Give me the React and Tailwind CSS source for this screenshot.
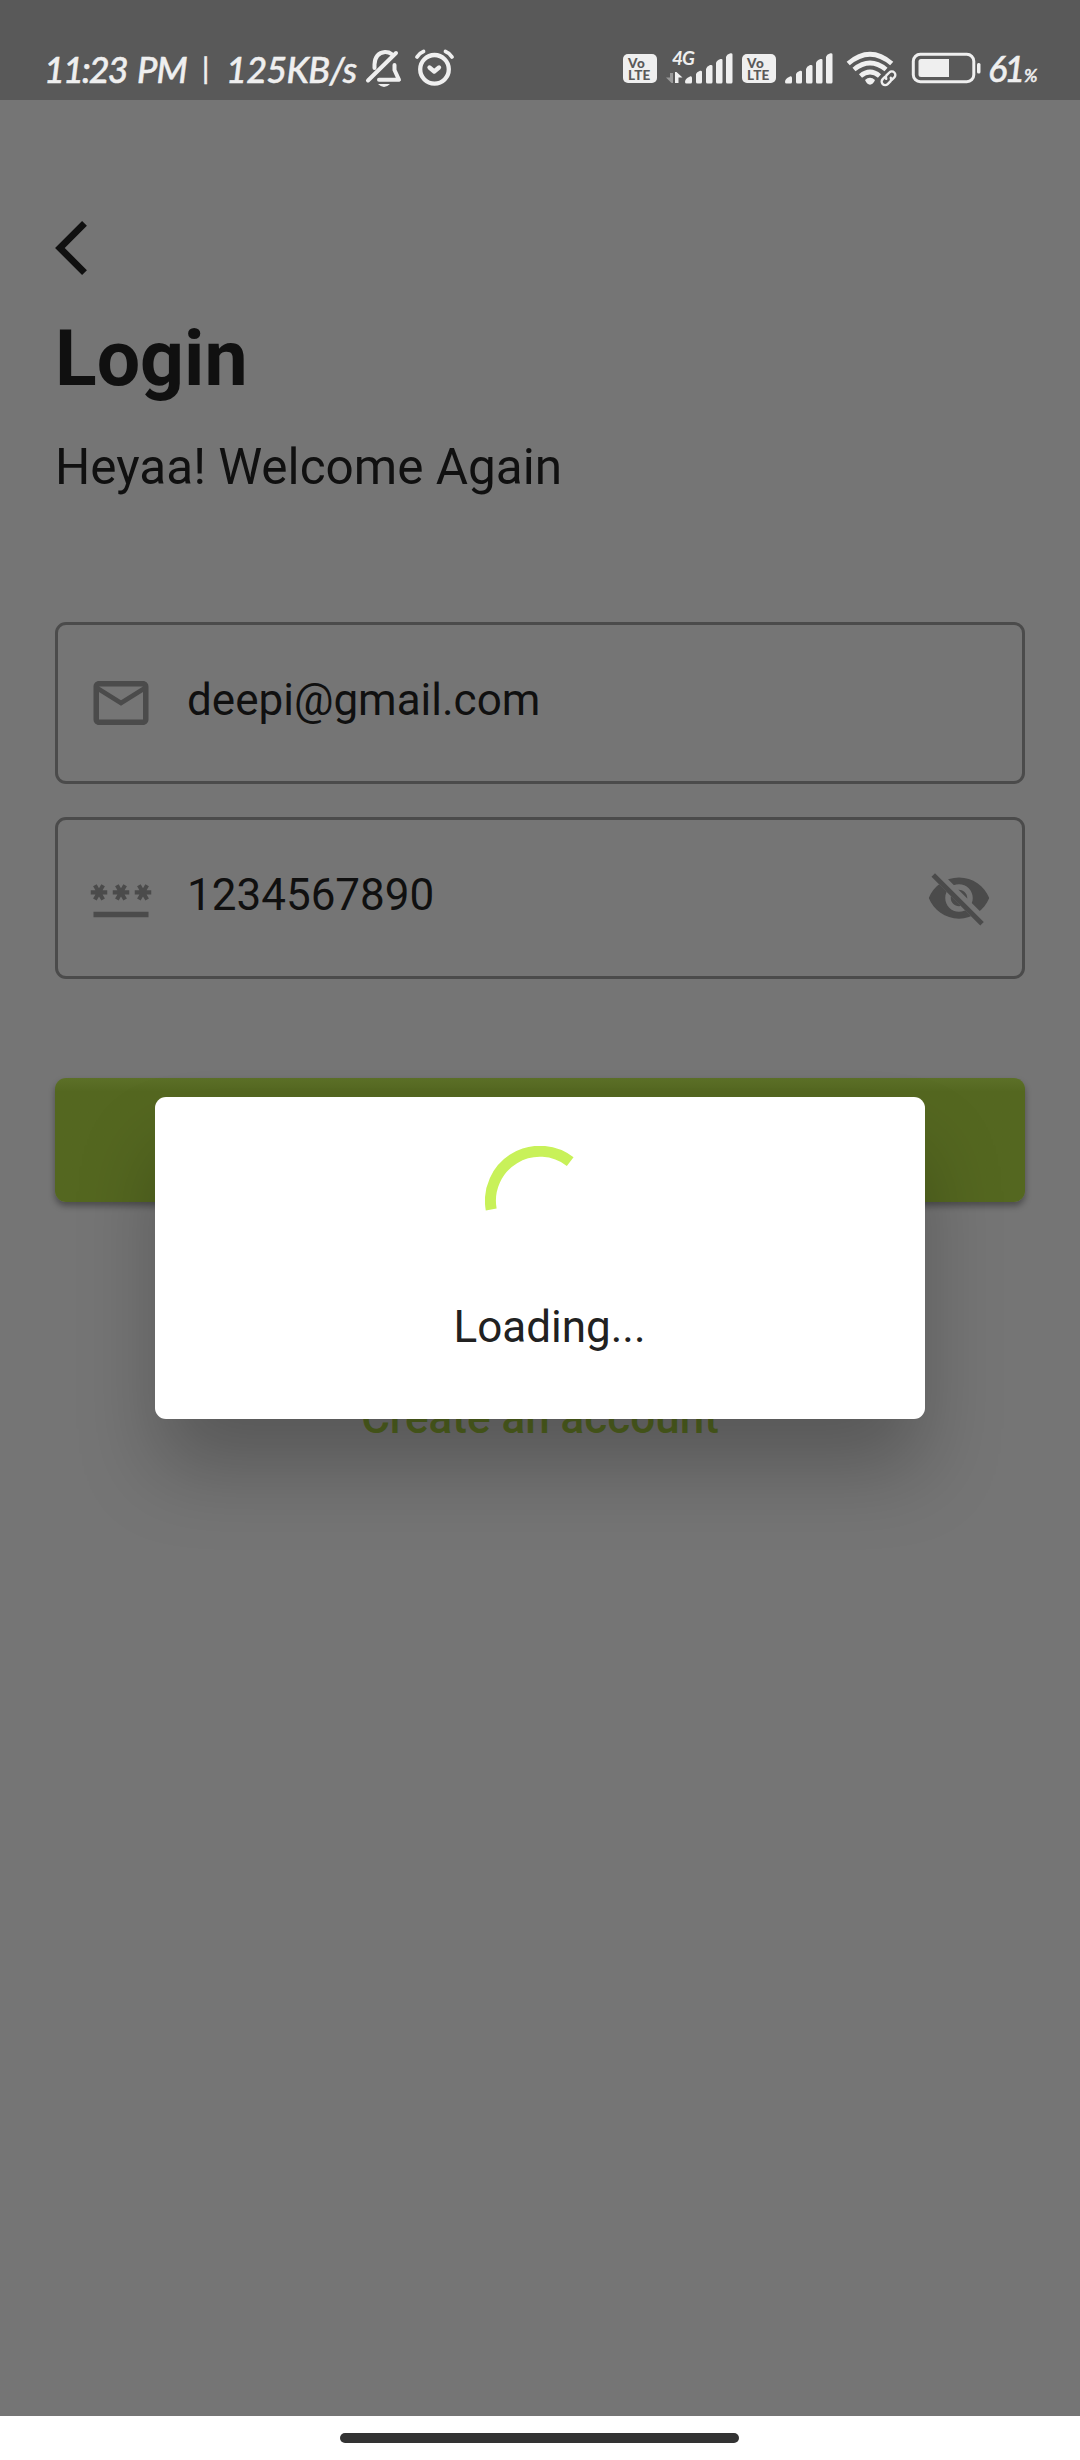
import React from "react";
import { MdOutlineMail, MdPassword } from "react-icons/md";

function MutedBell() {
  return (
    <svg className="ml-[7px] shrink-0" width="38" height="100" viewBox="365 0 38 100" fill="none" stroke="#efefef" strokeWidth="4" strokeLinecap="round" strokeLinejoin="round">
      <path d="M374.500 68V64.500Q375 53 385 52Q389 51.900 391.500 54" />
      <path d="M368 80.500L396 53" />
      <path d="M394.500 65V70L399 79.800H379" />
      <path d="M378 84H390Q384 90 378 84Z" fill="#efefef" stroke="none" />
    </svg>
  );
}

function Alarm() {
  return (
    <svg className="ml-[11px] shrink-0" width="42" height="100" viewBox="414 0 42 100" fill="none" stroke="#efefef" strokeWidth="4.300" strokeLinecap="round" strokeLinejoin="round">
      <circle cx="434.500" cy="69.300" r="14.300" />
      <path d="M429.500 67.500L434.200 71.500L439 67.500" />
      <path d="M417 57Q419.500 53 423.500 51.500M452 57Q449.500 53 445.500 51.500" strokeWidth="3.800" />
    </svg>
  );
}

function VoLte({ className }) {
  return (
    <div className={"flex h-[29px] w-[34px] shrink-0 flex-col items-start justify-center rounded-[5px] bg-[#efefef] pl-[5px] font-['Lato'] text-[13.5px] font-black leading-[12px] text-[#595959] " + className}>
      <span className="tracking-[0.5px]">Vo</span>
      <span className="tracking-[0.3px]">LTE</span>
    </div>
  );
}

function SignalBars({ className }) {
  return (
    <svg className={"shrink-0 " + className} width="48" height="100" viewBox="0 0 48 100" fill="#efefef">
      <path d="M0 82Q0 79 4 77L5.500 76.300Q7 76 7 78V82Q7 83.500 5.500 83.500H1.500Q0 83.500 0 82Z" />
      <path d="M11 74Q11.500 72 15 70.800Q17 70.300 17 72V82Q17 83.500 15.500 83.500H12.500Q11 83.500 11 82Z" />
      <path d="M21 69Q21.500 66.500 25 65Q27.500 64.500 27.500 66V82Q27.500 83.500 26 83.500H22.500Q21 83.500 21 82Z" />
      <path d="M31 63Q31.500 60.500 35.500 59Q37.500 58.500 37.500 60V82Q37.500 83.500 36 83.500H32.500Q31 83.500 31 82Z" />
      <path d="M41 57Q41.500 54.500 45.500 53.200Q47.500 53 47.500 54.500V82Q47.500 83.500 46 83.500H42.500Q41 83.500 41 82Z" />
    </svg>
  );
}

function MobileData() {
  return (
    <div className="ml-[9px] flex h-[36px] w-[30px] shrink-0 flex-col">
      <span className="pl-[6px] font-['Lato'] text-[19px] font-bold italic leading-[18px] tracking-[-1px] text-[#efefef]">4G</span>
      <svg className="mt-[4px]" width="18" height="14" viewBox="0 0 18 14">
        <path d="M4 2H7V12H5.500L0 6.500H4Z" fill="#989898" />
        <path d="M9 12V1H10.500L16.500 6.500H12.500V12Z" fill="#efefef" />
      </svg>
    </div>
  );
}

function Wifi() {
  return (
    <svg className="ml-[13px] shrink-0" width="52" height="100" viewBox="846 0 52 100" fill="none" stroke="#efefef">
      <path d="M848.200 63.500Q870 45 891.700 63.500" strokeWidth="4.800" />
      <path d="M854 69.500Q870 56.500 886 69.500" strokeWidth="4.800" />
      <path d="M860.500 76Q870 68 879.500 76" strokeWidth="4.800" />
      <path d="M865 80Q870 75.500 875 80Q873 84.500 870 84.700Q867 84.500 865 80Z" fill="#efefef" stroke="none" />
      <path d="M881 74H886V84H881Z" fill="#595959" stroke="none" />
      <g transform="rotate(-45 888.500 78.300)" strokeWidth="2.400" strokeLinecap="round" strokeLinejoin="round">
        <path d="M887 74.800H883.800A3.500 3.500 0 0 0 883.800 81.800H888A3.500 3.500 0 0 0 890.500 79.500" />
        <path d="M890 81.800H893.200A3.500 3.500 0 0 0 893.200 74.800H889A3.500 3.500 0 0 0 886.500 77.100" />
      </g>
    </svg>
  );
}

function Battery() {
  return (
    <svg className="ml-[13px] shrink-0" width="71" height="100" viewBox="911 0 71 100">
      <rect x="913.300" y="54.300" width="60.500" height="27.400" rx="7" fill="none" stroke="#efefef" strokeWidth="3" />
      <path d="M921 59H949V77H921Q918.500 77 918.500 74.500V61.500Q918.500 59 921 59Z" fill="#efefef" />
      <rect x="977" y="63" width="3.500" height="10.500" rx="1.500" fill="#efefef" />
    </svg>
  );
}

function StatusBar() {
  return (
    <header className="flex h-[100px] shrink-0 items-center bg-[#595959] pl-[44px] text-[#efefef]">
      <div className="mt-[36px] flex h-[36px] w-[314px] shrink-0 whitespace-nowrap pt-[1px] font-['Lato'] text-[36px] font-medium italic leading-[36px] [-webkit-text-stroke:0.5px_#efefef]">
        <span className="w-[93px] tracking-[-2px]">11:23</span>
        <span className="w-[65px] tracking-[-1px]">PM</span>
        <span className="mt-[3px] w-[24px] text-[28px] leading-[28px]">|</span>
        <span className="tracking-[-0.700px]">125KB/s</span>
      </div>
      <MutedBell />
      <Alarm />
      <VoLte className="ml-[167px] mt-[37px]" />
      <div className="mt-[34px]"><MobileData /></div>
      <SignalBars className="-ml-[11px]" />
      <VoLte className="ml-[9px] mt-[37px]" />
      <SignalBars className="ml-[9px]" />
      <Wifi />
      <Battery />
      <div className="ml-[6px] mt-[36px] flex h-[36px] items-baseline font-['Lato'] text-[36px] font-medium italic leading-[36px] [-webkit-text-stroke:0.5px_#efefef]">
        <span className="tracking-[-3px]">61</span>
        <span className="ml-[2px] text-[18px]">%</span>
      </div>
    </header>
  );
}

function HiddenEye() {
  return (
    <svg className="shrink-0" width="66" height="66" viewBox="0 0 24 24">
      <clipPath id="eye-cut">
        <path d="M2 4.270L19.730 22L22.270 19.460L4.540 1.730V1H23V23H1V4.270Z" />
      </clipPath>
      <path clipPath="url(#eye-cut)" fill="#4b4b4b" d="M12 4.500C7 4.500 2.730 7.610 1 12c1.730 4.390 6 7.500 11 7.500s9.270-3.110 11-7.500c-1.730-4.390-6-7.500-11-7.500zM12 17c-2.760 0-5-2.240-5-5s2.240-5 5-5 5 2.240 5 5-2.240 5-5 5zM12 9c-1.660 0-3 1.340-3 3s1.340 3 3 3 3-1.340 3-3-1.340-3-3-3z" />
      <path d="M3.270 4.270L19.740 20.740" fill="none" stroke="#4b4b4b" strokeWidth="1.800" strokeLinecap="square" />
    </svg>
  );
}

function Field({ icon, value, trailing }) {
  return (
    <div className="flex h-[162px] items-center rounded-[11px] border-[3px] border-[#4b4b4b] pl-[30px] pr-[30px]">
      {icon}
      <span className="ml-[33px] flex-1 pb-[6px] text-[44px] leading-[52px] text-[#101010]">{value}</span>
      {trailing}
    </div>
  );
}

function LoadingDialog() {
  return (
    <div className="absolute left-[155px] top-[1097px] flex h-[322px] w-[770px] flex-col items-center rounded-[11px] bg-white shadow-[0_52px_80px_-4px_rgba(0,0,0,0.25)]">
      <svg className="mt-[49px]" width="110" height="110" viewBox="0 0 110 110" fill="none">
        <path d="M6.200 63.500A49.500 49.500 0 0 1 85.200 15.600" stroke="#c8f159" strokeWidth="11" />
      </svg>
      <p className="ml-[19px] mt-[45px] text-[44px] leading-[52px] text-[#212121]">Loading...</p>
    </div>
  );
}

export default function App() {
  return (
    <div className="relative flex h-[2460px] w-[1080px] flex-col overflow-hidden bg-[#757575] font-['Roboto',sans-serif] text-[#101010]">
      <StatusBar />
      <main className="flex flex-1 flex-col px-[55px]">
        <svg className="mt-[121px]" width="32" height="54" viewBox="0 2.100 11.670 19.800" fill="#101010">
          <path d="M11.670 3.870L9.900 2.100 0 12l9.900 9.900 1.770-1.770L3.540 12z" />
        </svg>
        <h1 className="mt-[39px] text-[77px] font-bold leading-[90px]">Login</h1>
        <p className="mt-[34px] text-[49.5px] leading-[58px]">Heyaa! Welcome Again</p>
        <div className="mt-[126px] flex flex-col gap-[33px]">
          <Field icon={<MdOutlineMail size={66} color="#4b4b4b" className="shrink-0" />} value="deepi@gmail.com" />
          <Field icon={<MdPassword size={66} color="#4b4b4b" className="shrink-0" />} value="1234567890" trailing={<HiddenEye />} />
        </div>
        <button className="mt-[99px] h-[124px] rounded-[11px] bg-linear-to-b from-[#5c7028] to-[#546720] to-[14px] shadow-[0_4px_6px_rgba(0,0,0,0.35)]" aria-label="Login" />
        <a className="mt-[190px] self-center text-[44px] font-medium leading-[52px] text-[#546720]">Create an account</a>
      </main>
      <LoadingDialog />
      <footer className="flex h-[44px] shrink-0 bg-white pl-[340px]">
        <div className="mt-[17px] h-[10px] w-[399px] rounded-full bg-[#333333]" />
      </footer>
    </div>
  );
}
